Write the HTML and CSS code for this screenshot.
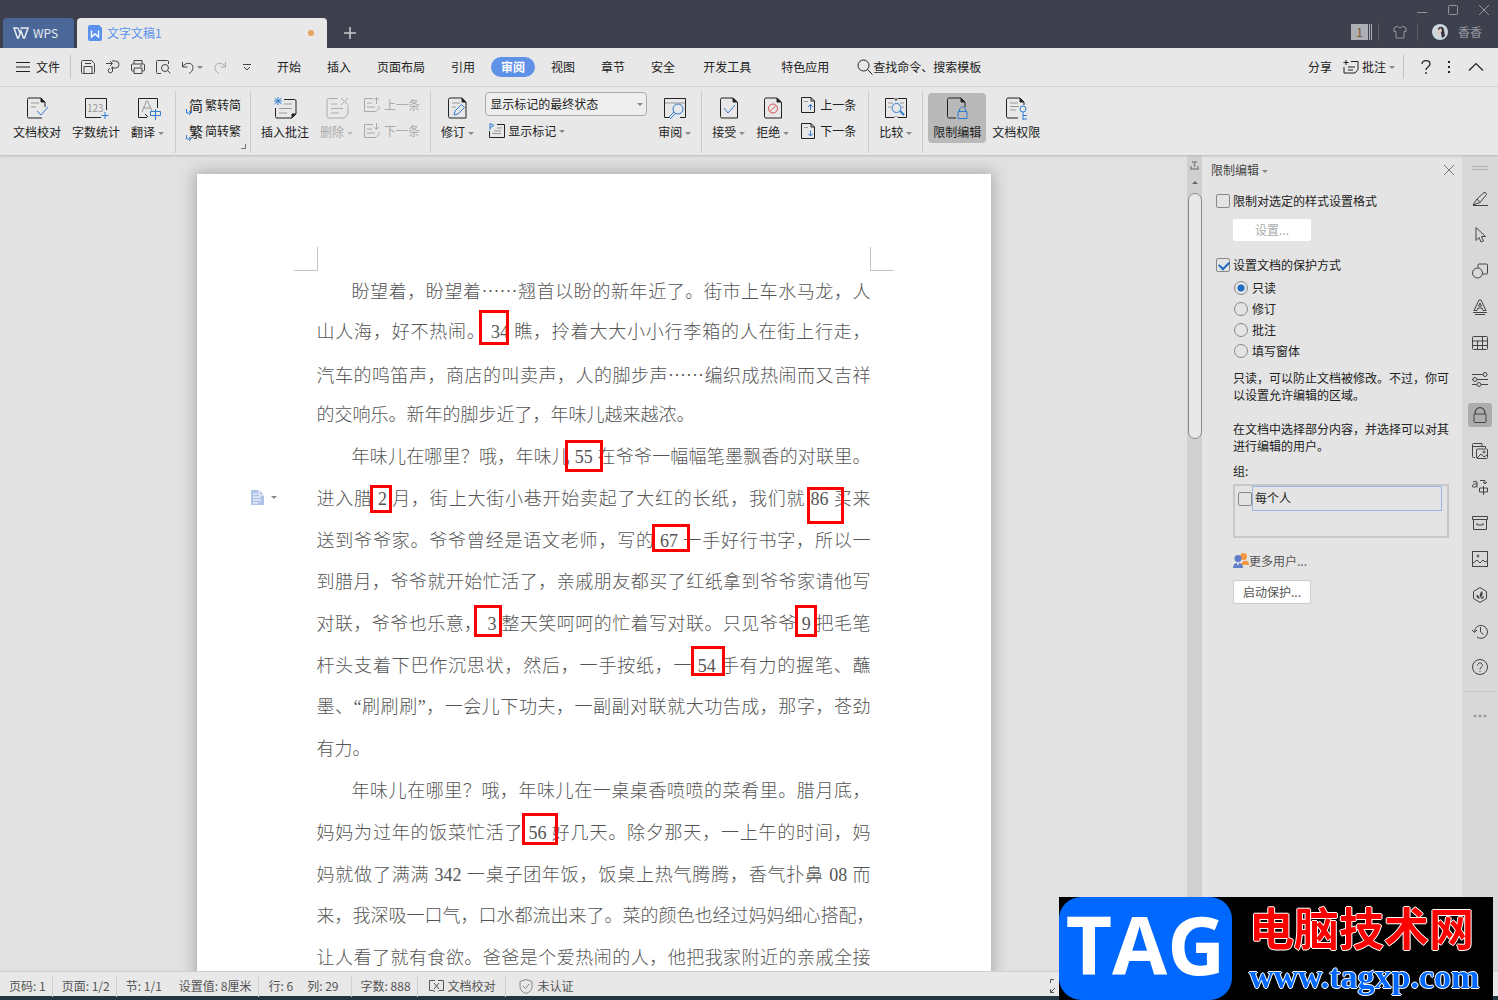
FILE: index.html
```html
<!DOCTYPE html>
<html lang="zh-CN">
  <head>
    <meta charset="UTF-8" />
    <meta name="viewport" content="width=device-width, initial-scale=1.0" />
    <title>文字文稿1 - WPS</title>
    <link rel="stylesheet" href="styles.css">
  </head>
  <body>
    <header class="titlebar">
      <button class="wps-home">
        <svg width="16" height="12" viewBox="0 0 16 12"><path d="M5 1H1l3.500 10h1L8 4l2.500 7h1L15 1H7.500M5 1l2 5" stroke-width="1.500"/></svg>
        WPS
      </button>
      <div class="doc-tab">
        <svg width="15" height="16" viewBox="0 0 15 16"><path d="M2 0h9l3 3v11a2 2 0 0 1-2 2H2a2 2 0 0 1-2-2V2a2 2 0 0 1 2-2z" fill="#5a91ee" stroke="none"/><path d="M3.500 5.500V12l3.500-3 3.500 3V5.500" stroke="#fff" stroke-width="1.400"/></svg>
        <span class="doc-name">文字文稿1</span>
        <span class="unsaved"></span>
      </div>
      <button class="new-tab" aria-label="新建"><svg width="12" height="12" viewBox="0 0 12 12"><path d="M6 0v12M0 6h12" stroke-width="1.600"/></svg></button>
      <div class="title-right">
        <div class="window-buttons">
          <button aria-label="最小化"><svg width="10" height="10" viewBox="0 0 10 10"><path d="M0 7.500h10"/></svg></button>
          <button aria-label="最大化"><svg width="10" height="10" viewBox="0 0 10 10"><rect x=".5" y=".5" width="9" height="9" rx="1"/></svg></button>
          <button aria-label="关闭"><svg width="10" height="10" viewBox="0 0 10 10"><path d="M0 0l10 10M10 0L0 10"/></svg></button>
        </div>
        <div class="account">
          <span class="tab-count">1</span>
          <i class="bar"></i>
          <svg width="14" height="14" viewBox="0 0 14 14"><path d="M4.500 1L1 3v3.500h2V13h8V6.500h2V3L9.500 1C9 3.500 5 3.500 4.500 1z"/></svg>
          <i class="bar"></i>
          <svg class="avatar" width="16" height="16" viewBox="0 0 16 16"><circle cx="8" cy="8" r="8" fill="#ccd6dc" stroke="none"/><path d="M6 5c1-3 6-3 6 1l1 6-3 2-1-5-3-1z" fill="#3b3442" stroke="none"/><path d="M5 7l4-3 1 3-3 4z" fill="#e6c9c0" stroke="none"/></svg>
          <span>香香</span>
        </div>
      </div>
    </header>

    <nav class="menubar">
      <button class="file-btn"><svg width="14" height="12" viewBox="0 0 14 12"><path d="M0 1.500h14M0 6h14M0 10.500h14"/></svg>文件</button>
      <i class="sep"></i>
      <div class="quick">
        <button aria-label="保存"><svg width="14" height="14" viewBox="0 0 14 14"><path d="M.5 12.500v-11a1 1 0 0 1 1-1h9l3 3v9a1 1 0 0 1-1 1h-11a1 1 0 0 1-1-1zM3 13V6.500h8V13M4 3.500h6"/></svg></button>
        <button aria-label="输出为PDF"><svg width="14" height="14" viewBox="0 0 14 14"><path d="M0 3.500h6M4 1l2.500 2.500L4 6M6 1h3.500a3.500 3.500 0 0 1 0 7H5M6.500 6.500V11A2.200 2.200 0 1 1 4 8.500"/></svg></button>
        <button aria-label="打印"><svg width="14" height="14" viewBox="0 0 14 14"><path d="M3 4V.5h8V4M3 11H1.500a1 1 0 0 1-1-1V5a1 1 0 0 1 1-1h11a1 1 0 0 1 1 1v5a1 1 0 0 1-1 1H11M3 8h8v5.500H3zM9 6h2"/></svg></button>
        <button aria-label="打印预览"><svg width="15" height="14" viewBox="0 0 15 14"><path d="M5 13.500H1.500a1 1 0 0 1-1-1v-11a1 1 0 0 1 1-1h10a1 1 0 0 1 1 1V4M11.500 10.500l3 3"/><circle cx="9" cy="8" r="3.500"/></svg></button>
        <button aria-label="撤销"><svg width="12" height="13" viewBox="0 0 12 13"><path d="M.5 1v5h5M.5 6C3 1 11 1 11 6.500c0 3-2 5-4 6"/></svg><i class="caret"></i></button>
        <button aria-label="恢复" class="off"><svg width="12" height="13" viewBox="0 0 12 13"><path d="M11.500 1v5h-5M11.500 6C9 1 1 1 1 6.500c0 3 2 5 4 6"/></svg></button>
        <button aria-label="自定义" class="custom"><svg width="8" height="7" viewBox="0 0 8 7"><path d="M0 .5h8M1 3l3 3 3-3"/></svg></button>
      </div>
      <div class="tabs">
        <button>开始</button>
        <button>插入</button>
        <button>页面布局</button>
        <button>引用</button>
        <button class="active"><span>审阅</span></button>
        <button>视图</button>
        <button>章节</button>
        <button>安全</button>
        <button class="wide">开发工具</button>
        <button class="wide">特色应用</button>
      </div>
      <button class="search"><svg width="16" height="16" viewBox="0 0 16 16"><circle cx="6.500" cy="6.500" r="5.500"/><path d="M10.500 10.500l5 5"/></svg>查找命令、搜索模板</button>
      <div class="menu-right">
        <button>分享</button>
        <button class="note-btn"><svg width="16" height="14" viewBox="0 0 16 14"><path d="M3 0v5M.5 2.500h5M8 1.500h7v8l-3 3.500H1V7M5 7h7M5 10h5"/></svg>批注<i class="caret"></i></button>
        <i class="sep"></i>
        <button aria-label="帮助"><svg width="10" height="14" viewBox="0 0 10 14"><path d="M1 4c0-4.500 8-4.500 8 0 0 3-4 3-4 6M5 12v2" stroke-width="1.300"/></svg></button>
        <button aria-label="更多"><svg width="2" height="12" viewBox="0 0 2 12"><path d="M1 0v2M1 5v2M1 10v2" stroke-width="2"/></svg></button>
        <button aria-label="收起功能区"><svg width="14" height="8" viewBox="0 0 14 8"><path d="M0 7.500l7-7 7 7" stroke-width="1.200"/></svg></button>
      </div>
    </nav>

    <section class="ribbon">
      <div class="group first">
        <button class="big"><svg viewBox="0 0 24 24"><path d="M17 22H4a1.500 1.500 0 0 1-1.500-1.500v-17A1.500 1.500 0 0 1 4 2h12l4 4v5"/><path d="M16 2l4 4h-4z" fill="currentColor"/><path class="g" d="M6 7h8M6 11h5"/><path class="b" d="M12 15l4 4 7-8"/></svg><span>文档校对</span></button>
        <button class="big"><svg viewBox="0 0 24 24"><path d="M17 21.500H1.500v-19h21V14"/><text x="3" y="16" class="num">123</text><path class="b" d="M21 16v7M17.500 19.500h7"/></svg><span>字数统计</span></button>
        <button class="big"><svg viewBox="0 0 24 24"><path d="M11 21.500H2.500v-19h19V12M9 18l3 3"/><path class="g" d="M6 16l4.500-11h1L16 15M7.500 12h7"/><path class="b" d="M14.500 15.500h10v4h-10zM19.500 13v11"/></svg><span>翻译<i class="caret"></i></span></button>
      </div>
      <div class="group">
        <div class="rows">
          <button><b class="glyph">简<svg viewBox="0 0 6 6"><path class="b" d="M.5 0v4H5M3 2l2 2-2 2"/></svg></b>繁转简</button>
          <button><b class="glyph">繁<svg viewBox="0 0 6 6"><path class="b" d="M.5 0v4H5M3 2l2 2-2 2"/></svg></b>简转繁</button>
        </div>
        <i class="launcher"></i>
      </div>
      <div class="group">
        <button class="big"><svg viewBox="0 0 24 24"><path d="M11 3.500h10.500a1.500 1.500 0 0 1 1.500 1.500v13l-4 4H4a1.500 1.500 0 0 1-1.500-1.500V12"/><path d="M19 22v-4h4z" fill="currentColor"/><path class="g" d="M11 8h8M6 12.500h13M6 17h8"/><path class="b" d="M5 1v8M1.500 2l7 6M8.500 2l-7 6M1 5h8"/></svg><span>插入批注</span></button>
        <button class="big off"><svg viewBox="0 0 24 24"><path d="M13 2.500H3.500A1.500 1.500 0 0 0 2 4v16.500A1.500 1.500 0 0 0 3.500 22H19l4-4v-8M6 8h6M6 12.500h12M6 17h8M16 2l7 7M23 2l-7 7"/></svg><span>删除<i class="caret"></i></span></button>
        <div class="rows off">
          <button><svg viewBox="0 0 16 16"><path d="M9 1.500H.5v13H12l3-3V9M3 6h5M3 10h8M12.500 7V1M10 3l2.500-2.500L15 3"/></svg>上一条</button>
          <button><svg viewBox="0 0 16 16"><path d="M9 1.500H.5v13H12l3-3V9M3 6h5M3 10h8M12.500 0v6M10 4l2.500 2.500L15 4"/></svg>下一条</button>
        </div>
      </div>
      <div class="group">
        <button class="big"><svg viewBox="0 0 24 24"><path d="M16 2H4a1.500 1.500 0 0 0-1.500 1.500v17A1.500 1.500 0 0 0 4 22h16V6z"/><path d="M16 2l4 4h-4z" fill="currentColor"/><path class="g" d="M6 7h8M6 11h4"/><path class="b" d="M8 19l1-4 6.500-6.500 3 3L12 18z"/></svg><span>修订<i class="caret"></i></span></button>
        <div class="rows markup">
          <span class="select"><select aria-label="显示状态"><option>显示标记的最终状态</option></select><i class="caret"></i></span>
          <button><svg viewBox="0 0 16 16"><path d="M8 1.500h7.500v13H.5V8"/><path class="g" d="M8 5h5M3 10.500h9M5 8h7"/><path class="b" d="M1 7V.5l4 2-4 2"/></svg>显示标记<i class="caret"></i></button>
        </div>
        <button class="big"><svg viewBox="0 0 24 24"><path d="M6 21.500H1.500V2.500h21v19H17"/><path class="g" d="M2 7h20"/><circle class="b" cx="15" cy="13" r="5"/><path class="b" d="M11 16l-5 5 1.500 1.500 5-5"/></svg><span>审阅<i class="caret"></i></span></button>
      </div>
      <div class="group changes">
        <button class="big"><svg viewBox="0 0 24 24"><path d="M16 2H5a1.500 1.500 0 0 0-1.500 1.500v17A1.500 1.500 0 0 0 5 22h15.500V6z"/><path d="M16 2l4 4h-4z" fill="currentColor"/><path class="b" d="M7 12l4 5 7-8"/></svg><span>接受<i class="caret"></i></span></button>
        <button class="big"><svg viewBox="0 0 24 24"><path d="M16 2H5a1.500 1.500 0 0 0-1.500 1.500v17A1.500 1.500 0 0 0 5 22h15.500V6z"/><path d="M16 2l4 4h-4z" fill="currentColor"/><circle class="r" cx="12" cy="12.500" r="4.500"/><path class="r" d="M9 15.500l6-6"/></svg><span>拒绝<i class="caret"></i></span></button>
        <div class="rows">
          <button><svg viewBox="0 0 16 16"><path d="M11 .5H1.500v15h13V4zM11 .5V4h3.500"/><path class="g" d="M4 4.500h4"/><path class="b" d="M10.500 13V7.500M8 10l2.500-2.500L13 10"/></svg>上一条</button>
          <button><svg viewBox="0 0 16 16"><path d="M11 .5H1.500v15h13V4zM11 .5V4h3.500"/><path class="g" d="M4 4.500h4"/><path class="b" d="M10.500 7.500V13M8 10.500l2.500 2.500 2.500-2.500"/></svg>下一条</button>
        </div>
      </div>
      <div class="group">
        <button class="big"><svg viewBox="0 0 24 24"><path d="M11 3.500L10 2.500H1.500v19H10l1-1M12 2v3M13 3.500l1-1h8.500v19H14l-1-1"/><path class="g" d="M4 7h5M4 11h3M16 7h4M18 11h2"/><circle class="b" cx="12.500" cy="12" r="4.500"/><path class="b" d="M16 15l4 4" stroke-width="2"/></svg><span>比较<i class="caret"></i></span></button>
      </div>
      <div class="group last">
        <button class="big pressed"><svg viewBox="0 0 24 24"><path d="M11 22H4a1.500 1.500 0 0 1-1.500-1.500v-17A1.500 1.500 0 0 1 4 2h12l4 4v5"/><path d="M16 2l4 4h-4z" fill="currentColor"/><path class="b" d="M13 15.500h9v7h-9zM14.500 15v-1c0-4 6-4 6 0v1"/></svg><span>限制编辑</span></button>
        <button class="big"><svg viewBox="0 0 24 24"><path d="M14 22H4a1.500 1.500 0 0 1-1.500-1.500v-17A1.500 1.500 0 0 1 4 2h12l4 4v3"/><path d="M16 2l4 4h-4z" fill="currentColor"/><path class="g" d="M6 7h8M6 10.500h9M6 14h6"/><circle class="b" cx="19" cy="13" r="3"/><path class="b" d="M19 16v8M19 19.500h4M19 23h4"/></svg><span>文档权限</span></button>
      </div>
    </section>

    <main class="workspace">
      <div class="canvas">
        <article class="page">
          <i class="corner left"></i>
          <i class="corner right"></i>
          <p>
            <span class="indent">盼望着，盼望着<em>……</em>翘首以盼的新年近了。街市上车水马龙，人</span>
            <span>山人海，好不热闹。 34 瞧，拎着大大小小行李箱的人在街上行走，</span>
            <span>汽车的鸣笛声，商店的叫卖声，人的脚步声<em>……</em>编织成热闹而又吉祥</span>
            <span class="end">的交响乐。新年的脚步近了，年味儿越来越浓。</span>
          </p>
          <p>
            <span class="indent">年味儿在哪里？哦，年味儿 55 在爷爷一幅幅笔墨飘香的对联里。</span>
            <span>进入腊 2 月，街上大街小巷开始卖起了大红的长纸，我们就 86 买来</span>
            <span>送到爷爷家。爷爷曾经是语文老师，写的 67 一手好行书字，所以一</span>
            <span>到腊月，爷爷就开始忙活了，亲戚朋友都买了红纸拿到爷爷家请他写</span>
            <span>对联，爷爷也乐意， 3 整天笑呵呵的忙着写对联。只见爷爷 9 把毛笔</span>
            <span>杆头支着下巴作沉思状，然后，一手按纸，一 54 手有力的握笔、蘸</span>
            <span>墨、“刷刷刷”，一会儿下功夫，一副副对联就大功告成，那字，苍劲</span>
            <span class="end">有力。</span>
          </p>
          <p>
            <span class="indent">年味儿在哪里？哦，年味儿在一桌桌香喷喷的菜肴里。腊月底，</span>
            <span>妈妈为过年的饭菜忙活了 56 好几天。除夕那天，一上午的时间，妈</span>
            <span>妈就做了满满 342 一桌子团年饭，饭桌上热气腾腾，香气扑鼻 08 而</span>
            <span>来，我深吸一口气，口水都流出来了。菜的颜色也经过妈妈细心搭配，</span>
            <span>让人看了就有食欲。爸爸是个爱热闹的人，他把我家附近的亲戚全接</span>
          </p>
          <!-- red frames round the numbers -->
          <svg class="marks" width="794" height="820" viewBox="0 0 794 820">
            <rect x="283.500" y="137.500" width="27" height="32"/>
            <rect x="369.500" y="267.500" width="35" height="29"/>
            <rect x="174.500" y="312.500" width="19" height="25"/>
            <rect x="611.500" y="314.500" width="34" height="34"/>
            <rect x="456.500" y="351.500" width="35" height="25"/>
            <rect x="278.500" y="432.500" width="25" height="29"/>
            <rect x="599.500" y="432.500" width="19" height="29"/>
            <rect x="495.500" y="473.500" width="31" height="27"/>
            <rect x="326.500" y="640.500" width="33" height="29"/>
          </svg>
          <button class="para-tool" aria-label="段落布局"><svg width="13" height="15" viewBox="0 0 13 15"><path d="M0 0h8l5 5v10H0z" fill="#afc3e6" stroke="none"/><path d="M2 4h4M2 7h8M2 10h8M2 13h5M8 0v5h5" stroke="#fff"/></svg><i class="caret"></i></button>
        </article>
      </div>

      <div class="scrollbar">
        <svg width="9" height="9" viewBox="0 0 9 9"><path d="M2 1h5M4.500 1v5M0 8h9M1 5v3M8 5v3" stroke="#888" stroke-width="1.500"/></svg>
        <i class="up"></i>
        <i class="thumb"></i>
      </div>

      <aside class="panel">
        <div class="panel-head">
          <span>限制编辑<i class="caret"></i></span>
          <button aria-label="关闭"><svg width="10" height="10" viewBox="0 0 10 10"><path d="M0 0l10 10M10 0L0 10" stroke="#777"/></svg></button>
        </div>
        <label class="row check"><input type="checkbox">限制对选定的样式设置格式</label>
        <button class="push" disabled>设置...</button>
        <label class="row check second"><input type="checkbox" checked>设置文档的保护方式</label>
        <div class="radios">
          <label class="row"><input type="radio" name="mode" checked>只读</label>
          <label class="row"><input type="radio" name="mode">修订</label>
          <label class="row"><input type="radio" name="mode">批注</label>
          <label class="row"><input type="radio" name="mode">填写窗体</label>
        </div>
        <p>只读，可以防止文档被修改。不过，你可以设置允许编辑的区域。</p>
        <p>在文档中选择部分内容，并选择可以对其进行编辑的用户。</p>
        <div class="group-label">组:</div>
        <div class="user-list">
          <label><input type="checkbox"><span>每个人</span></label>
        </div>
        <a class="more-users" href="#"><svg width="16" height="16" viewBox="0 0 16 16"><g stroke="none"><circle cx="10.500" cy="3.500" r="3.500" fill="#f59742"/><path d="M8 12c0-5 8-6 8-1v1z" fill="#f59742"/><circle cx="5" cy="5.500" r="3.500" fill="#5f7fc6"/><path d="M0 15c0-7 10-7 10 0z" fill="#5f7fc6"/><path d="M4 10l1 3 1-3z" fill="#fff"/></g></svg>更多用户...</a>
        <button class="push start">启动保护...</button>
      </aside>

      <nav class="side-tools">
        <i class="handle"></i>
        <button aria-label="编辑"><svg viewBox="0 0 16 16"><path d="M1 14.500h15M1 14l4-6 7-6.500q2-.5 2.500 2L8 11.500zM5 8l3 3.500"/></svg></button>
        <button aria-label="选择"><svg viewBox="0 0 16 16"><path d="M4 .5v13l3-3 2 4.500 2.500-1-2-4.500h4z"/></svg></button>
        <button aria-label="形状"><svg viewBox="0 0 16 16"><circle cx="5.500" cy="10" r="5"/><path d="M6 5V2a1 1 0 0 1 1-1h7.500a1 1 0 0 1 1 1v8a1 1 0 0 1-1 1h-4"/></svg></button>
        <button aria-label="艺术字"><svg viewBox="0 0 16 16"><path d="M2 11.500L7 1h2l5 10.500h-3L10 9H6l-1 2.500zM8 4l-1.500 3h3zM1 13.500h14M3 15.500h10"/></svg></button>
        <button aria-label="表格"><svg viewBox="0 0 16 16"><rect x=".5" y="1.500" width="15" height="13" rx="1"/><path d="M.5 6h15M.5 10.500h15M5.500 6v8.500M10.500 1.500v13"/></svg></button>
        <button aria-label="属性"><svg viewBox="0 0 16 16"><path d="M0 3.500h11M0 8.500h1M5 8.500h11M0 13.500h5M9 13.500h7"/><circle cx="13" cy="3.500" r="2"/><circle cx="3" cy="8.500" r="2"/><circle cx="7" cy="13.500" r="2"/></svg></button>
        <button class="on" aria-label="限制编辑"><svg viewBox="0 0 16 16"><rect x="2" y="7" width="12" height="8.500" rx="1"/><path d="M3 7C3-1.500 13-1.500 13 7" stroke-width="1.300"/></svg></button>
        <button aria-label="图片库"><svg viewBox="0 0 16 16"><path d="M3 14.500H1.500a1 1 0 0 1-1-1v-12a1 1 0 0 1 1-1H10V3M.5 3.500h13V5"/><rect x="4.500" y="6" width="11" height="9.500" rx="1"/><path d="M5 15l4-4 3 3 3-2"/><circle cx="12" cy="9" r="1"/></svg></button>
        <button aria-label="翻译"><svg viewBox="0 0 16 16"><path d="M1 3q2-1.500 4 0v5.500M5 5Q.5 4.500.5 7T5 7M8 1.500h5v3M11 3l2 2 2-2M7.500 9h8v4h-8zM11.500 7v9"/></svg></button>
        <button aria-label="备份"><svg viewBox="0 0 16 16"><path d="M.5 1.500h15v3H.5zM1.500 4.500h13v10h-13zM5 8v2h6V8"/></svg></button>
        <button aria-label="图片"><svg viewBox="0 0 16 16"><rect x=".5" y=".5" width="15" height="15"/><path d="M1 12l4-3 3 3 3-3 2 2 2-1"/><circle cx="6" cy="5" r="1"/></svg></button>
        <button aria-label="稻壳"><svg viewBox="0 0 16 16"><path d="M8 .5l6.500 4v7L8 15.500l-6.500-4v-7z"/><path d="M7.500 12Q4 11 4.500 7.500q3 1 3 4.500zM8 11q-1-5 2-7 2 4-2 7zM9 12q0-2 3-3 0 3-3 3z" fill="currentColor" stroke="none"/></svg></button>
        <button aria-label="历史"><svg viewBox="0 0 16 16"><path d="M2.500 8.500A6.500 6.500 0 1 1 5 14M0 7l2.500 2.500L5 7M8.500 4v5l3 2.500"/></svg></button>
        <button aria-label="帮助"><svg viewBox="0 0 16 16"><circle cx="8" cy="8" r="7.500"/><path d="M5.500 6.500C5.500 3 10.500 3 10.500 6.500 10.500 8 8 8 8 10.500M8 12v1"/></svg></button>
        <i class="line"></i>
        <button class="dots" aria-label="更多"><svg viewBox="0 0 16 16"><circle cx="3" cy="8" r="1"/><circle cx="8" cy="8" r="1"/><circle cx="13" cy="8" r="1"/></svg></button>
      </nav>
    </main>

    <footer class="statusbar">
      <span>页码: 1</span>
      <span>页面: 1/2</span>
      <span class="double"><span>节: 1/1</span><span>设置值: 8厘米</span></span>
      <span class="double place"><span>行: 6</span><span>列: 29</span></span>
      <span>字数: 888</span>
      <button><svg width="15" height="14" viewBox="0 0 15 14"><path d="M6 1.500H.5v10H4l2 1M9 1.500h5.500v10H10l-1 1M5 4l5 6M10 4l-5 6"/></svg>文档校对</button>
      <button class="auth"><svg width="14" height="15" viewBox="0 0 14 15"><path d="M7 .5l6 2v5q0 5-6 7-6-2-6-7v-5zM4 7l2.500 2.500L10 5" stroke="#888"/></svg>未认证</button>
      <button class="fit" aria-label="全屏"><svg width="14" height="14" viewBox="0 0 14 14"><path d="M4 .5H.5V4M.5 10v3.500H4M1 13l4-4M10 .5h3.500V4M13 1L9 5"/></svg></button>
    </footer>
    <div class="taskbar"></div>

    <div class="watermark">
      <strong>TAG</strong>
      <div class="site">
        <span class="site-name">电脑技术网</span>
        <span class="site-url">www.tagxp.com</span>
      </div>
    </div>
  </body>
</html>
```
FILE: styles.css
```css
* {
  box-sizing: border-box;
}
body {
  margin: 0;
  height: 100vh;
  display: flex;
  flex-direction: column;
  overflow: hidden;
  background: #e1e1e1;
  color: #222;
  font: 12px/16px "Noto Sans CJK SC", sans-serif;
}
button {
  display: flex;
  align-items: center;
  padding: 0;
  border: 0;
  background: none;
  color: inherit;
  font: inherit;
  white-space: nowrap;
}
svg {
  flex: none;
  fill: none;
  stroke: currentColor;
  overflow: visible;
}
.caret {
  flex: none;
  display: inline-block;
  border: 3px solid transparent;
  border-top-color: #888;
  border-bottom: 0;
  margin-left: 3px;
  vertical-align: middle;
}

/* title bar */
.titlebar {
  flex: none;
  height: 48px;
  display: flex;
  align-items: flex-end;
  padding-left: 3px;
  background: #3e414d;
  color: #c8c9cd;
}
.wps-home {
  width: 71px;
  height: 30px;
  gap: 4px;
  padding-left: 10px;
  border-radius: 4px 4px 0 0;
  background: #4a6798;
  color: #e8ebf2;
}
.doc-tab {
  width: 250px;
  height: 30px;
  display: flex;
  align-items: center;
  gap: 4px;
  margin-left: 3px;
  padding: 0 13px 0 11px;
  border-radius: 4px 4px 0 0;
  background: #e8e8e8;
}
.doc-name {
  flex: 1;
  color: #5a91ee;
}
.unsaved {
  width: 6px;
  height: 6px;
  border-radius: 50%;
  background: #e8a25c;
}
.new-tab {
  height: 30px;
  margin-left: 17px;
}
.title-right {
  height: 48px;
  margin-left: auto;
  color: #94969e;
}
.window-buttons {
  display: flex;
  justify-content: flex-end;
  gap: 21px;
  height: 20px;
  padding-right: 9px;
}
.account {
  display: flex;
  align-items: center;
  gap: 10px;
  height: 24px;
  padding-right: 16px;
}
.tab-count {
  width: 17px;
  height: 16px;
  background: #aeafb5;
  color: #775b33;
  text-align: center;
  box-shadow: 1px 0 #3e414d, 2px 0 #aeafb5, 3px 0 #3e414d, 4px 0 #aeafb5;
}
.account .bar {
  width: 1px;
  height: 18px;
  margin-right: 4px;
  background: #5a5d68;
}

/* menu */
.menubar {
  flex: none;
  height: 39px;
  display: flex;
  align-items: center;
  padding-left: 16px;
  border-bottom: 1px solid #d3d3d3;
  background: #e8e8e8;
}
.file-btn {
  width: 54px;
  gap: 6px;
}
.sep {
  width: 1px;
  height: 24px;
  background: #c4c4c4;
}
.quick {
  display: flex;
  align-items: center;
  gap: 11px;
  width: 193px;
  padding-left: 10px;
  color: #444;
}
.quick .custom {
  margin-left: 6px;
}
.off {
  color: #aaa;
}
.quick .off {
  color: #aaa;
}
.tabs {
  display: flex;
}
.tabs button {
  height: 20px;
  padding: 0 13px;
}
.tabs .wide {
  padding: 0 15px;
}
.tabs .active {
  padding: 0 3px;
  color: #fff;
  font-weight: bold;
}
.active span {
  padding: 2px 10px;
  border-radius: 10px;
  background: #5f91e6;
}
.search {
  margin-left: 13px;
}
.menu-right {
  display: flex;
  align-items: center;
  gap: 19px;
  margin-left: auto;
  padding-right: 15px;
}
.menu-right .sep {
  margin-right: -2px;
}
.note-btn {
  gap: 3px;
  margin: 0 -11px 0 -8px;
}
.note-btn .caret {
  margin-left: 0;
}
.menu-right .sep + button {
  margin-right: -2px;
}

/* ribbon */
.ribbon {
  flex: none;
  height: 68px;
  display: flex;
  padding-top: 4px;
  background: #e8e8e8;
  box-shadow: 0 1px 2px #bbb;
  z-index: 1;
}
.group {
  height: 62px;
  display: flex;
  align-items: flex-start;
  gap: 11px;
  padding: 2px 10px 0;
  border-right: 1px solid #ccc;
}
.group.first {
  padding: 2px 11px 0 13px;
}
.group.changes {
  padding-right: 12px;
}
.group.last {
  gap: 6px;
  padding-left: 5px;
  border: 0;
}
.big {
  flex-direction: column;
  gap: 4px;
  height: 50px;
  padding-top: 3px;
}
.big svg {
  width: 24px;
  height: 24px;
}
.big.pressed {
  padding: 3px 5px 0;
  border-radius: 4px;
  background: #b9b9b9;
}
.big .num {
  fill: #999;
  stroke: none;
  font-size: 10px;
}
.b {
  stroke: #2f7bd0;
}
.g {
  stroke: #999;
}
.r {
  stroke: #d84e4e;
}
.rows {
  display: grid;
  grid-auto-rows: 26px;
  margin-top: -1px;
}
.rows button {
  gap: 4px;
}
.rows svg {
  width: 16px;
  height: 16px;
}
.rows .caret {
  margin-left: 0;
}
.off .caret {
  border-top-color: #bbb;
}
.glyph {
  position: relative;
  margin-right: -2px;
  padding-left: 3px;
  font-size: 14px;
  font-weight: normal;
}
.rows .glyph svg {
  position: absolute;
  left: 0;
  bottom: -2px;
  width: 6px;
  height: 6px;
}
.launcher {
  align-self: flex-end;
  width: 5px;
  height: 5px;
  margin: 0 -6px 4px -11px;
  border: solid #777;
  border-width: 0 1px 1px 0;
}
.markup {
  width: 162px;
}
.markup button {
  gap: 3px;
  padding-left: 4px;
}
.select {
  display: flex;
  align-items: center;
  height: 24px;
  padding-right: 3px;
  border: 1px solid #aaa;
  border-radius: 4px;
  background: #eee;
}
.select select {
  flex: 1;
  padding: 0 4px;
  border: 0;
  appearance: none;
  background: none;
  color: inherit;
  font: inherit;
}

/* document */
.workspace {
  flex: 1;
  min-height: 0;
  display: flex;
}
.canvas {
  flex: 1;
  min-width: 0;
  overflow: hidden;
}
.page {
  position: relative;
  width: 794px;
  min-height: 1123px;
  margin: 19px auto 0;
  padding: 95px 120px;
  background: #fff;
  box-shadow: 0 0 14px 2px #aaa;
  color: #555;
  font: 300 18px/42px "Liberation Serif", "Noto Sans CJK SC", serif;
}
.page p {
  display: grid;
  grid-template-columns: minmax(0, 1fr);
  grid-auto-rows: 42px 42px 41px;
  margin: 0;
}
.page p span {
  text-align: justify;
  text-align-last: justify;
  white-space: nowrap;
}
.page p .indent {
  padding-left: 35px;
}
.page p .end {
  text-align-last: left;
}
.page em {
  font-family: "Noto Sans CJK SC", sans-serif;
  font-style: normal;
}
.corner {
  position: absolute;
  top: 73px;
  width: 24px;
  height: 24px;
  border: 0 solid #c4c4c4;
  border-bottom-width: 1px;
}
.corner.left {
  left: 97px;
  border-right-width: 1px;
}
.corner.right {
  right: 97px;
  border-left-width: 1px;
}
.marks {
  position: absolute;
  top: 0;
  left: 0;
  stroke: #f00;
  stroke-width: 3px;
}
.para-tool {
  position: absolute;
  top: 316px;
  left: 54px;
  gap: 4px;
}
.scrollbar {
  width: 15px;
  display: flex;
  flex-direction: column;
  align-items: center;
  padding-top: 6px;
  background: #d0d0d0;
}
.up {
  margin: 11px 0 9px;
  border: 3px solid transparent;
  border-bottom-color: #666;
  border-top: 0;
}
.thumb {
  width: 14px;
  height: 246px;
  border: 1px solid #888;
  border-radius: 7px;
  background: #e8e8e8;
}

/* restrict editing panel */
.panel {
  width: 260px;
  padding: 7px 13px 0 9px;
  background: #e4e4e4;
}
.panel-head {
  display: flex;
  justify-content: space-between;
  margin: 0 -5px 12px 0;
  color: #444;
}
.row {
  display: flex;
  align-items: center;
  gap: 4px;
  height: 21px;
}
.check {
  gap: 3px;
  padding-left: 5px;
}
.second {
  margin-top: 13px;
}
.panel input {
  flex: none;
  width: 14px;
  height: 14px;
  margin: 0;
  border: 1px solid #888;
  border-radius: 2px;
  appearance: none;
}
.panel input[type="radio"] {
  border-radius: 50%;
}
.panel input[type="radio"]:checked {
  background: radial-gradient(#1f6cc4 0 3px, transparent 4px);
}
.check input:checked::after {
  content: "";
  display: block;
  width: 8px;
  height: 5px;
  margin: 2px;
  border: solid #1f6cc4;
  border-width: 0 0 2px 2px;
  transform: rotate(-45deg);
}
.push {
  justify-content: center;
  width: 78px;
  height: 22px;
  margin: 8px 0 0 22px;
  border-radius: 2px;
  background: #fff;
}
.push:disabled {
  color: #aaa;
}
.radios {
  margin: 2px 0 8px 23px;
}
.panel p {
  margin: 0 0 17px 22px;
  line-height: 17px;
  width: 217px;
}
.panel .group-label {
  margin: -8px 0 5px 22px;
}
.user-list {
  height: 54px;
  margin-left: 22px;
  padding-left: 3px;
  border: 2px solid #c8c8c8;
}
.user-list label {
  display: flex;
  align-items: center;
  height: 25px;
  padding-right: 5px;
}
.user-list span {
  flex: 1;
  height: 25px;
  padding: 3px 2px;
  border: 1px solid #98b8e2;
}
.more-users {
  display: flex;
  align-items: center;
  margin: 15px 0 0 22px;
  color: #555;
  text-decoration: none;
}
.push.start {
  height: 24px;
  margin-top: 11px;
  border: 1px solid #ccc;
  color: #555;
}

/* right tool strip */
.side-tools {
  width: 36px;
  display: flex;
  flex-direction: column;
  align-items: center;
  gap: 12px;
  padding-top: 11px;
  background: #d8d8d8;
  color: #444;
}
.handle {
  width: 16px;
  height: 4px;
  margin-bottom: 5px;
  border: solid #b0b0b0;
  border-width: 1px 0;
}
.side-tools button {
  justify-content: center;
  width: 24px;
  height: 24px;
  border-radius: 3px;
}
.side-tools svg {
  width: 16px;
  height: 16px;
}
.side-tools .on {
  background: #adadad;
}
.line {
  width: 30px;
  height: 1px;
  background: #c4c4c4;
}
.side-tools .dots {
  color: #888;
}

/* bottom */
.statusbar {
  flex: none;
  height: 25px;
  display: flex;
  align-items: center;
  padding-top: 4px;
  border-top: 1px solid #d0d0d0;
  background: #e8e8e8;
  color: #555;
  z-index: 1;
}
.statusbar > * {
  height: 21px;
  padding: 2px 6px 0 9px;
  border-right: 1px solid #d0d0d0;
}
.double {
  display: flex;
  gap: 17px;
}
.double.place {
  gap: 14px;
  padding: 2px 12px 0 10px;
}
.statusbar button {
  gap: 4px;
  padding: 0 9px 0 11px;
}
.statusbar .auth {
  gap: 5px;
  padding-left: 13px;
  border: 0;
}
.statusbar .fit {
  margin-left: auto;
  padding-right: 434px;
  border: 0;
}
.taskbar {
  flex: none;
  height: 4px;
  background: #233741;
}
.watermark {
  position: fixed;
  right: 5px;
  bottom: 0;
  z-index: 2;
  display: flex;
  width: 434px;
  height: 103px;
  background: #000;
}
.watermark strong {
  width: 173px;
  border-radius: 22px;
  background: #0068ff;
  color: #fff;
  font: bold 80px/94px "Open Sans", sans-serif;
  text-align: center;
}
.site {
  display: flex;
  flex-direction: column;
  padding-left: 17px;
  white-space: nowrap;
}
.site-name {
  color: #f00;
  font-size: 45px;
  line-height: 60px;
  font-weight: bold;
  text-shadow: 1px 0 #fff, -1px 0 #fff, 0 1px #fff, 0 -1px #fff;
}
.site-url {
  color: #0068ff;
  font: bold 34px/40px "Liberation Serif", serif;
  text-shadow: 1px 0 #fff, -1px 0 #fff, 0 1px #fff, 0 -1px #fff;
}
```
